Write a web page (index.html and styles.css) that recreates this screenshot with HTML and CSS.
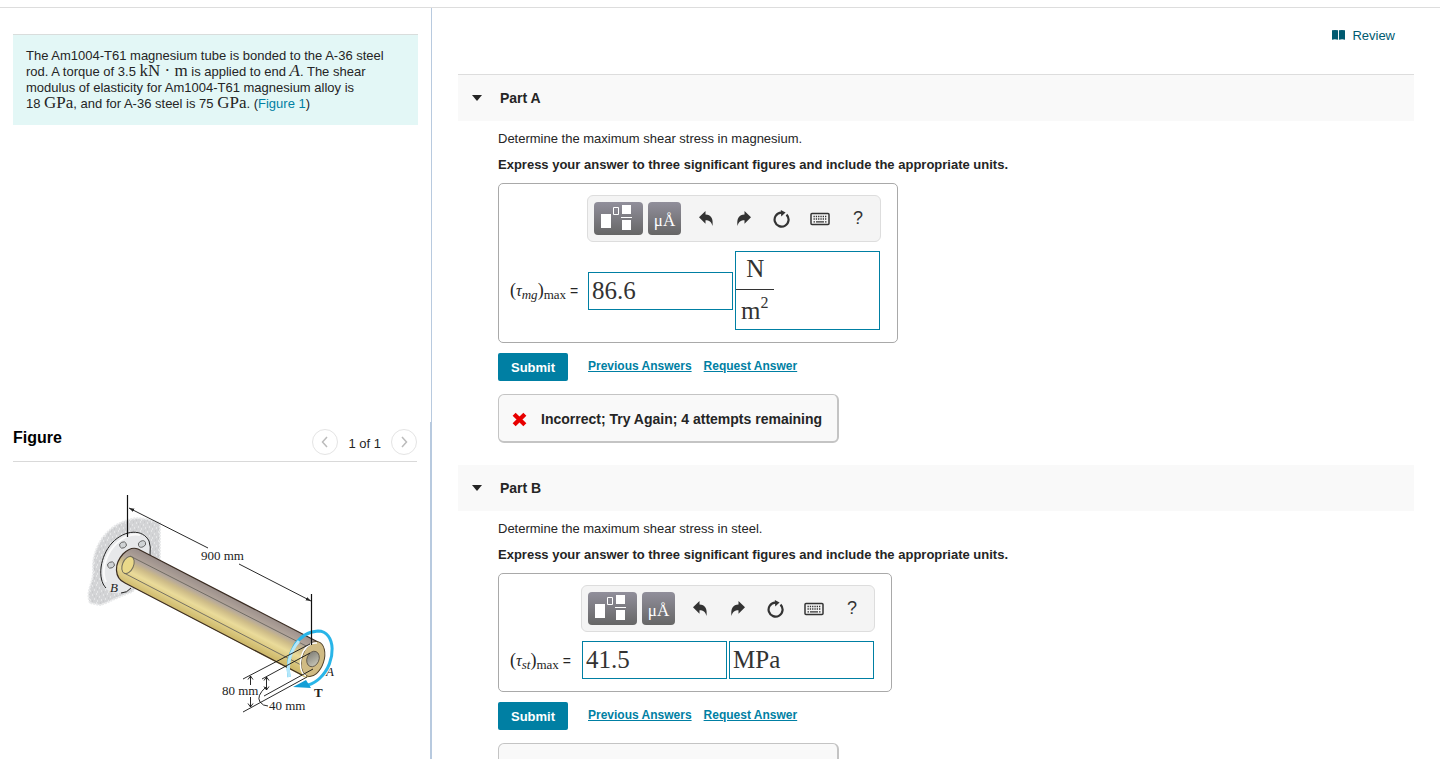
FILE: index.html
```html
<!DOCTYPE html>
<html lang="en">
<head>
  <meta charset="UTF-8">
  <meta name="viewport" content="width=device-width, initial-scale=1">
  <title>Torsion Homework</title>
  <link rel="stylesheet" href="styles.css">
</head>
<body>

<!-- shared icons -->
<svg class="sprite" aria-hidden="true">
  <symbol id="icon-undo" viewBox="0 0 16 16">
    <path d="M1 6.200 7.500 0v3.600c5.500.2 8 3.900 7 11.400-1.200-4.200-3.200-5.600-7-5.700v3.500z"/>
  </symbol>
  <symbol id="icon-redo" viewBox="0 0 16 16">
    <path d="M15 6.200 8.500 0v3.600c-5.500.2-8 3.900-7 11.400 1.200-4.200 3.200-5.600 7-5.700v3.500z"/>
  </symbol>
  <symbol id="icon-reset" viewBox="0 0 18 18">
    <path d="M13.500 4.600A7 7 0 1 1 8.200 2.600" fill="none" stroke="currentColor" stroke-width="2.200"/>
    <path d="M7.800 0 12.600 2.600 8.200 6.400z"/>
  </symbol>
  <symbol id="icon-keyboard" viewBox="0 0 20 14">
    <rect x="1" y="1.500" width="18" height="11" rx="1" fill="none" stroke="currentColor" stroke-width="1.500"/>
    <path d="M3.500 4.500h13M3.500 7h13" fill="none" stroke="currentColor" stroke-width="1.300" stroke-dasharray="1.300 1"/>
    <path d="M3.500 9.800h1.500M6 9.800h8M15 9.800h1.500" fill="none" stroke="currentColor" stroke-width="1.300"/>
  </symbol>
  <symbol id="icon-template" viewBox="0 0 35 27">
    <path d="M0 9h10v14H0zM21 0h9v9h-9zM21 15h9v10h-9zM20 12h11v1H20z"/>
    <path d="M12.500 2.500h5v7h-5z" fill="none" stroke="currentColor"/>
  </symbol>
</svg>

<div class="page">

  <div class="sidebar">
    <section class="problem">
      <p class="problem-text">The Am1004-T61 magnesium tube is bonded to the A-36 steel rod. A torque of 3.5&nbsp;<span class="math">kN&nbsp;·&nbsp;m</span> is applied to end <i class="math">A</i>. The shear modulus of elasticity for Am1004-T61 magnesium alloy is 18&nbsp;<span class="math">GPa</span>, and for A-36 steel is 75&nbsp;<span class="math">GPa</span>. (<a href="#figure">Figure 1</a>)</p>
    </section>

    <section class="figure" id="figure">
      <div class="figure-head">
        <h2>Figure</h2>
        <div class="pager">
          <button type="button" aria-label="Previous figure"><svg viewBox="0 0 12 12"><path d="M8 1 3.500 6 8 11"/></svg></button>
          <span>1 of 1</span>
          <button type="button" aria-label="Next figure"><svg viewBox="0 0 12 12"><path d="M4 1l4.500 5L4 11"/></svg></button>
        </div>
      </div>

      <svg class="drawing" viewBox="0 0 270 240" role="img" aria-label="Tube fixed at B with torque T at end A">
        <defs>
          <linearGradient id="tube" gradientUnits="userSpaceOnUse" x1="150" y1="111" x2="134" y2="143">
            <stop offset="0" stop-color="#9a8e8a"/>
            <stop offset=".3" stop-color="#b3a69c"/>
            <stop offset=".45" stop-color="#cdbb88"/>
            <stop offset=".65" stop-color="#eadb9a"/>
            <stop offset="1" stop-color="#cfba6c"/>
          </linearGradient>
          <linearGradient id="core" x1="0" y1="0" x2="1" y2="1">
            <stop offset="0" stop-color="#77766f"/>
            <stop offset="1" stop-color="#d2d0c1"/>
          </linearGradient>
          <pattern id="speckle" width="11" height="9" patternUnits="userSpaceOnUse">
            <rect width="11" height="9" fill="#d3d4d6"/>
            <path d="M1 2h1M5 1h1M8 4h1M3 6h1M10 7h1M6 8h1" stroke="#f8f8f8"/>
            <path d="M3 3h1M9 1h1M6 5h1M1 8h1" stroke="#c2c3c5"/>
          </pattern>
          <marker id="tip" viewBox="0 0 6 6" refX="6" refY="3" markerWidth="6" markerHeight="6" orient="auto-start-reverse">
            <path d="M0 1 6 3 0 5z"/>
          </marker>
        </defs>

        <!-- wall and flange -->
        <path d="M10 118C5 106 14 98 13 84C12 65 24 43 45 36C58 30 71 35 80 38L80 78L52 107C37 112 28 118 20 120z" fill="url(#speckle)" stroke="#e9eaeb" stroke-width="2" stroke-dasharray="2 1"/>
        <path d="M26 104C17 94 20 71 32 58C45 44 63 44 69 56C73 65 69 82 59 96C49 108 35 112 26 104z" fill="#e7e8ea"/>
        <path d="M26 103C17 94 20 71 32 58C45 44 63 44 69 56Q71 61 70 70M41 108Q47 108 51 103" fill="none" stroke="#222"/>
        <path d="M26 97C21 87 25 71 34 61C42 52 52 48 60 50" fill="none" stroke="#fafafa" stroke-width="2"/>
        <g fill="#d0d3d5" stroke="#555" stroke-width=".8">
          <ellipse cx="43" cy="60" rx="3.500" ry="3" transform="rotate(-25 43 60)"/>
          <ellipse cx="62" cy="59" rx="3.800" ry="3" transform="rotate(-25 62 59)"/>
          <ellipse cx="31" cy="80" rx="3.500" ry="3" transform="rotate(-25 31 80)"/>
        </g>

        <!-- tube -->
        <path d="M58 64 238 157A11 18 22 0 1 224 192L45 98C34 93 34 79 43 69C48 64 53 62 58 64z" fill="url(#tube)"/>
        <path d="M238 157 58 64C53 62 48 64 43 69C34 79 34 93 45 98L222 190" fill="none" stroke="#3a2c22" stroke-width="1.200"/>
        <path d="M50 71 236 166M44 88 225 182" fill="none" stroke="#6a665d" stroke-width=".9"/>
        <ellipse cx="48" cy="80" rx="5.500" ry="9" transform="rotate(24 48 80)" fill="#ead989" stroke="#706c5c"/>
        <ellipse cx="233" cy="174" rx="11" ry="18" transform="rotate(18 233 174)" fill="#d0bb84" stroke="#514128"/>
        <path d="M237 158C221 156 215 186 226 191" fill="none" stroke="#fff" stroke-width="1.500"/>
        <ellipse cx="233" cy="174" rx="6" ry="8" transform="rotate(22 233 174)" fill="url(#core)" stroke="#5b5346" stroke-width=".8"/>

        <!-- torque arrow -->
        <path d="M209 192C205 169 218 147 238 146C256 146 257 177 240 193Q235 198 228 200" fill="none" stroke="#29b5e8" stroke-width="3"/>
        <path d="M209 192C207 178 211 165 219 156" fill="none" stroke="#b4e7fa" stroke-width="3"/>
        <path d="M213 202 226 195 231 203z" fill="#159fd6"/>

        <!-- dimensions -->
        <g fill="none" stroke="#111" stroke-width=".9">
          <path d="M47.500 10V52M231.500 109V160" stroke-width="1.200"/>
          <path d="M128 63 49 23" marker-end="url(#tip)"/>
          <path d="M159 79 231 116" marker-end="url(#tip)"/>
          <path d="M163 194 230 159M182 194 230 168M184 211 233 184M163 227 227 192"/>
          <path d="M170.500 191V200M170.500 212V222"/>
          <path d="M168 194.500 170.500 191l2.500 3.500M168 218.500l2.500 3.500 2.500-3.500"/>
          <path d="M186.500 192V205M184 195.500l2.500-3.500 2.500 3.500M184 201.500l2.500 3.500 2.500-3.500M186 202Q176 211 180 217Q183 221 188 221"/>
        </g>
        <g class="drawing-text">
          <text x="121" y="75">900 mm</text>
          <text x="142" y="210">80 mm</text>
          <text x="189" y="225">40 mm</text>
          <text x="30" y="107" font-style="italic">B</text>
          <text x="246" y="191" font-style="italic">A</text>
          <text x="234" y="212" font-weight="bold">T</text>
        </g>
      </svg>
    </section>
  </div>

  <main class="content">
    <div class="tools">
      <a href="#review">
        <svg viewBox="0 0 14 12" aria-hidden="true"><path d="M0 1Q3.500 0 6.500 1v10Q3 10 0 11zM7.500 1Q10.500 0 14 1v10Q11 10 7.500 11z"/></svg>
        Review
      </a>
    </div>

    <section class="part">
      <header class="part-head part-head-first"><h2>Part A</h2></header>
      <form class="part-body">
        <p>Determine the maximum shear stress in magnesium.</p>
        <p><b>Express your answer to three significant figures and include the appropriate units.</b></p>
        <div class="answer">
          <div class="toolbar">
            <button class="key key-wide" type="button" aria-label="Templates"><svg><use href="#icon-template"/></svg></button>
            <button class="key" type="button" aria-label="Units">μÅ</button>
            <div class="actions">
              <button type="button" aria-label="Undo"><svg><use href="#icon-undo"/></svg></button>
              <button type="button" aria-label="Redo"><svg><use href="#icon-redo"/></svg></button>
              <button type="button" aria-label="Reset"><svg class="large"><use href="#icon-reset"/></svg></button>
              <button type="button" aria-label="Keyboard shortcuts"><svg class="wide"><use href="#icon-keyboard"/></svg></button>
              <button type="button" aria-label="Help">?</button>
            </div>
          </div>
          <label for="value-a"><span class="paren">(</span><i>τ<sub>mg</sub></i><span class="paren">)</span><sub>max</sub> <span class="equals">=</span></label>
          <div class="fields">
            <input id="value-a" type="text" value="86.6">
            <div class="units" contenteditable="true" role="textbox" aria-label="Units">
              <span class="fraction"><span class="top">N</span><span class="bottom">m<sup>2</sup></span></span>
            </div>
          </div>
        </div>
        <div class="submit-row">
          <button class="submit" type="submit">Submit</button>
          <a href="#previous-a">Previous Answers</a>
          <a href="#request-a">Request Answer</a>
        </div>
        <div class="feedback">
          <svg viewBox="0 0 14 14" aria-hidden="true"><path d="M2 2l10 10M12 2 2 12"/></svg>
          Incorrect; Try Again; 4 attempts remaining
        </div>
      </form>
    </section>

    <section class="part">
      <header class="part-head"><h2>Part B</h2></header>
      <form class="part-body">
        <p>Determine the maximum shear stress in steel.</p>
        <p><b>Express your answer to three significant figures and include the appropriate units.</b></p>
        <div class="answer answer-narrow">
          <div class="toolbar">
            <button class="key key-wide" type="button" aria-label="Templates"><svg><use href="#icon-template"/></svg></button>
            <button class="key" type="button" aria-label="Units">μÅ</button>
            <div class="actions">
              <button type="button" aria-label="Undo"><svg><use href="#icon-undo"/></svg></button>
              <button type="button" aria-label="Redo"><svg><use href="#icon-redo"/></svg></button>
              <button type="button" aria-label="Reset"><svg class="large"><use href="#icon-reset"/></svg></button>
              <button type="button" aria-label="Keyboard shortcuts"><svg class="wide"><use href="#icon-keyboard"/></svg></button>
              <button type="button" aria-label="Help">?</button>
            </div>
          </div>
          <label for="value-b"><span class="paren">(</span><i>τ<sub>st</sub></i><span class="paren">)</span><sub>max</sub> <span class="equals">=</span></label>
          <div class="fields">
            <input id="value-b" type="text" value="41.5">
            <input type="text" value="MPa" aria-label="Units">
          </div>
        </div>
        <div class="submit-row">
          <button class="submit" type="submit">Submit</button>
          <a href="#previous-b">Previous Answers</a>
          <a href="#request-b">Request Answer</a>
        </div>
        <div class="feedback"></div>
      </form>
    </section>
  </main>

</div>

</body>
</html>
```
FILE: styles.css
```css
* {
  box-sizing: border-box;
}
body {
  margin: 0;
  padding-top: 7px;
  height: 100vh;
  overflow: hidden;
  font-family: "Liberation Sans", Arial, sans-serif;
  font-size: 13px;
  color: #252525;
  background: #fff;
}
h2, p {
  margin: 0;
}
a {
  color: #007fa3;
}
button {
  padding: 0;
  border: 0;
  background: none;
  font-family: inherit;
  color: inherit;
  cursor: pointer;
}
svg {
  fill: currentColor;
}
.sprite {
  position: absolute;
  width: 0;
  height: 0;
}
.page {
  display: flex;
  height: 100%;
  border-top: 1px solid #ddd;
}

/* left column */
.sidebar {
  width: 30%;
  flex: none;
  display: flex;
  flex-direction: column;
}
.problem {
  flex: 1;
  padding: 26px 13px 0;
  border-right: 1px solid #b8cadf;
}
.problem-text {
  padding: 13px;
  border-top: 1px solid #d9dddc;
  background: #e3f7f6;
  line-height: 16px;
}
.problem-text a {
  text-decoration: none;
}
.math {
  font-family: "Liberation Serif", serif;
  font-size: 17px;
  line-height: 0;
}
.figure {
  min-height: 337px;
  padding: 0 13px;
  border-right: 2px solid #b8cadf;
}
.figure-head {
  display: flex;
  justify-content: space-between;
  height: 40px;
  border-bottom: 1px solid #d9d9d9;
}
.figure-head h2 {
  font-size: 16px;
  line-height: 32px;
  color: #000;
}
.pager {
  display: flex;
  align-items: center;
  gap: 10px;
}
.pager span {
  padding-top: 4px;
}
.pager button {
  display: flex;
  align-items: center;
  justify-content: center;
  width: 26px;
  height: 26px;
  border: 1px solid #e4e4e4;
  border-radius: 50%;
}
.pager svg {
  width: 12px;
  height: 12px;
  fill: none;
  stroke: #bbb;
  stroke-width: 1.5;
}
.drawing {
  display: block;
  width: 270px;
  height: 240px;
  margin: 23px 0 0 67px;
}
.drawing-text {
  font-family: "Liberation Serif", serif;
  font-size: 13px;
  fill: #222;
}

/* right column */
.content {
  flex: 1;
  min-width: 0;
  padding: 0 26px;
  overflow: hidden;
}
.tools {
  display: flex;
  justify-content: flex-end;
  height: 66px;
  padding: 17px 19px 0 0;
}
.tools a {
  display: flex;
  align-items: center;
  gap: 7px;
  height: 20px;
  color: #005a70;
  text-decoration: none;
}
.tools svg {
  width: 13px;
  height: 12px;
}
.part {
  margin-bottom: 22px;
}
.part-head {
  display: flex;
  align-items: center;
  gap: 18px;
  padding-left: 14px;
  background: #f9f9f9;
}
.part-head-first {
  border-top: 1px solid #ddd;
}
.part-head::before {
  content: "";
  border: 5px solid transparent;
  border-top: 6px solid #252525;
  border-bottom: 0;
}
.part-head h2 {
  font-size: 14px;
  line-height: 46px;
}
.part-body {
  padding: 9px 40px 0;
}
.part-body p {
  margin-bottom: 9px;
  line-height: 17px;
}

/* answer box */
.answer {
  display: grid;
  grid-template-columns: 77px 294px;
  row-gap: 9px;
  align-items: center;
  width: 400px;
  margin-top: 10px;
  padding: 11px 11px 12px;
  border: 1px solid #a9a9a9;
  border-radius: 5px;
}
.answer-narrow {
  grid-template-columns: 71px 294px;
  width: 394px;
}
.toolbar {
  grid-column: 2;
  display: flex;
  align-items: center;
  gap: 5px;
  height: 47px;
  padding-left: 6px;
  border: 1px solid #ddd;
  border-radius: 6px;
  background: #f4f4f4;
}
.key {
  display: flex;
  align-items: center;
  justify-content: center;
  width: 33px;
  height: 33px;
  padding-top: 4px;
  border-radius: 4px;
  background: linear-gradient(#918f9b, #666);
  color: #fff;
  font-family: "Liberation Serif", serif;
  font-size: 17px;
}
.key-wide {
  width: 49px;
  padding-top: 0;
}
.key svg {
  width: 35px;
  height: 27px;
}
.actions {
  display: flex;
  margin-left: 1px;
}
.actions button {
  display: flex;
  align-items: center;
  justify-content: center;
  width: 38px;
  height: 33px;
  font-size: 18px;
  color: #333;
}
.actions svg {
  width: 16px;
  height: 16px;
}
.actions .large {
  width: 18px;
  height: 18px;
}
.actions .wide {
  width: 20px;
  height: 14px;
}
.answer label {
  font-family: "Liberation Serif", serif;
  font-size: 16px;
  white-space: nowrap;
}
.answer sub {
  font-size: 13px;
  line-height: 1;
  vertical-align: -3px;
}
.answer .paren {
  font-size: 18px;
}
.answer .equals {
  font-family: "Liberation Sans", Arial, sans-serif;
  font-size: 14px;
}
.fields {
  display: grid;
  grid-template-columns: 1fr 1fr;
  align-items: center;
  gap: 2px;
  padding: 0 1px;
}
.fields input, .units {
  width: 100%;
  min-width: 0;
  border: 1px solid #007fa3;
  font-family: "Liberation Serif", serif;
  font-size: 25px;
  color: #333;
}
.fields input {
  height: 38px;
  padding: 0 3px;
}
.units {
  height: 79px;
}
.fraction {
  display: inline-flex;
  flex-direction: column;
  text-align: center;
}
.fraction .top {
  padding: 0 6px 3px;
  line-height: 34px;
  border-bottom: 1px solid #333;
}
.fraction .bottom {
  padding: 0 6px 0 5px;
  line-height: 42px;
}
.fraction sup {
  font-size: 16px;
  line-height: 1;
  vertical-align: 11px;
}

/* submit and result */
.submit-row {
  display: flex;
  align-items: center;
  gap: 12px;
  margin-top: 10px;
}
.submit-row a {
  padding-bottom: 2px;
  font-weight: bold;
  font-size: 12px;
}
.submit {
  width: 70px;
  height: 28px;
  margin-right: 8px;
  border-radius: 2px;
  background: #007fa3;
  color: #fff;
  font-size: 13px;
  font-weight: bold;
}
.feedback {
  display: flex;
  align-items: center;
  gap: 14px;
  width: 341px;
  height: 49px;
  margin-top: 13px;
  padding: 2px 0 0 13px;
  border: 1px solid #c4c4c4;
  border-width: 1px 2px 2px 1px;
  border-radius: 6px;
  background: #f9f9f9;
  font-size: 14px;
  font-weight: bold;
}
.feedback svg {
  width: 15px;
  height: 15px;
  stroke: #e80000;
  stroke-width: 4;
}
```
